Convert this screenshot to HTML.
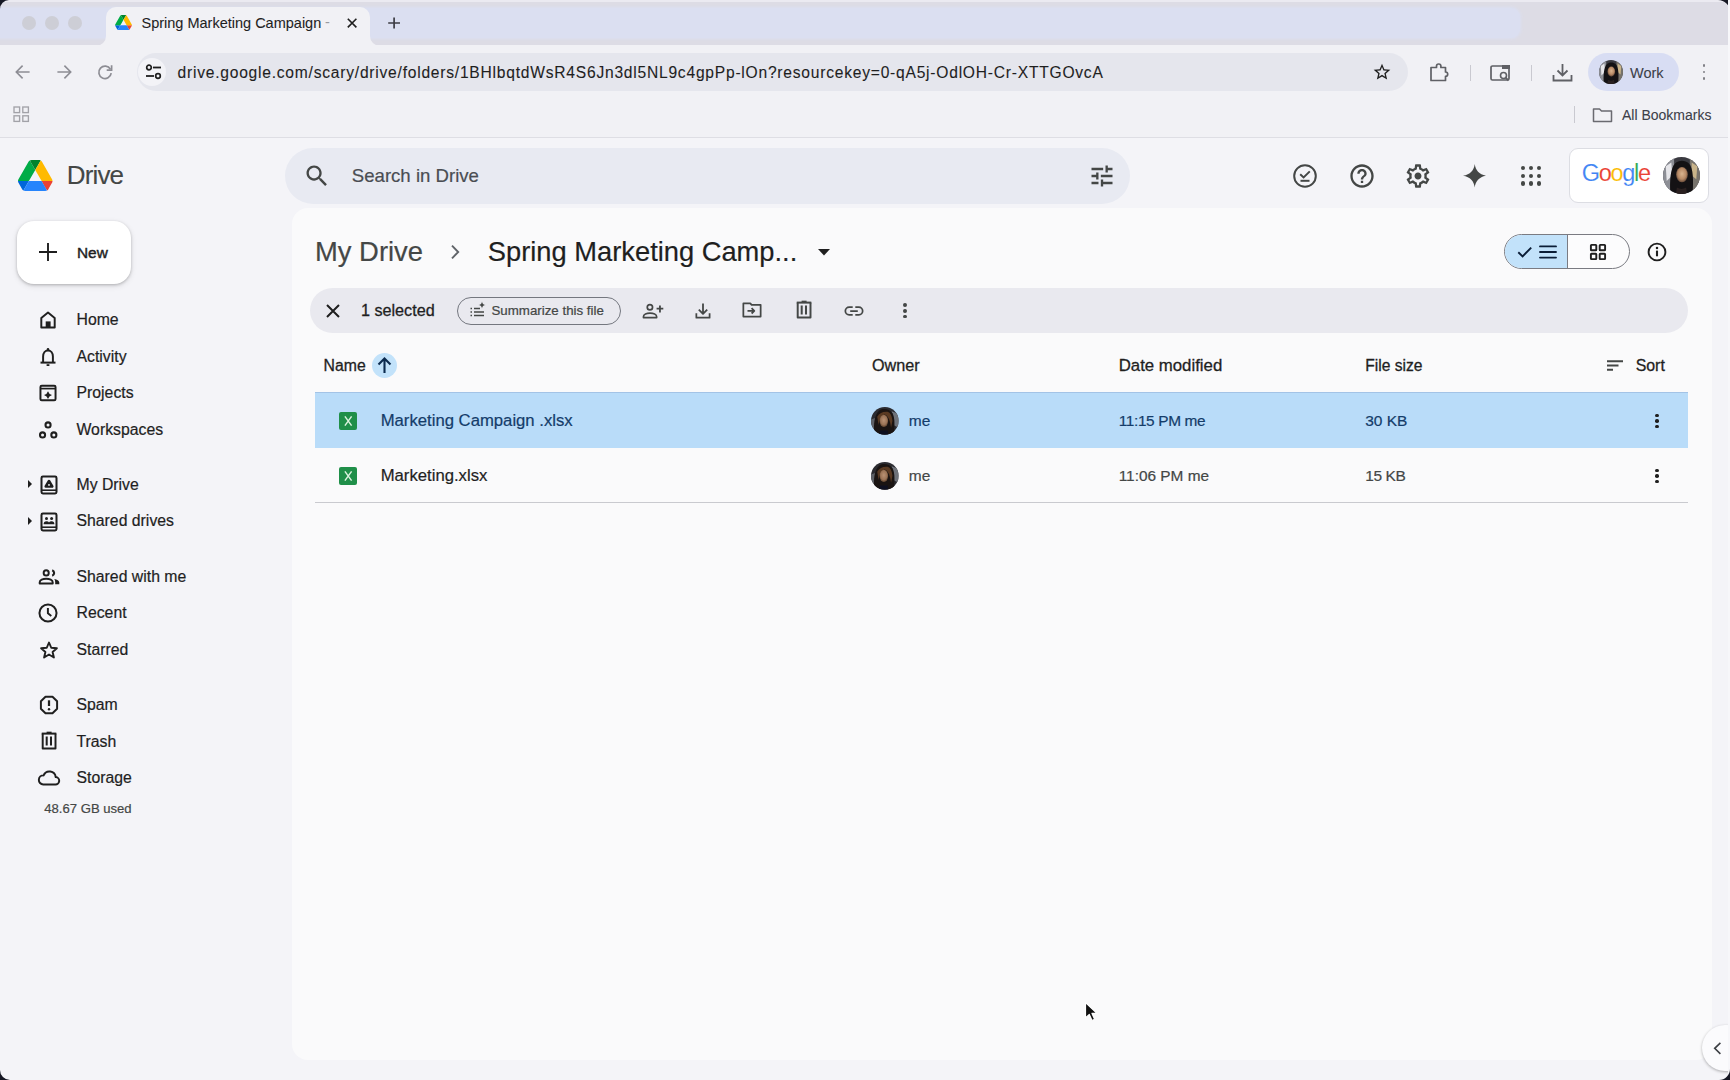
<!DOCTYPE html><html><head><meta charset="utf-8"><style>
html,body{margin:0;padding:0;}
body{width:1730px;height:1080px;position:relative;overflow:hidden;background:#f4f4f8;font-family:"Liberation Sans",sans-serif;}
.b{position:absolute;}
.t{position:absolute;white-space:nowrap;line-height:1.15;}
</style></head><body>
<div class="b" style="left:0px;top:0px;width:1730px;height:46px;background:#dddce5;"></div>
<div class="b" style="left:0px;top:0px;width:1730px;height:2px;background:#ebeaf1;"></div>
<div class="b" style="left:-12px;top:8px;width:1532px;height:30px;border-radius:9px;background:#dbdff1;box-shadow:0 0 3px 1px #dbdff1;"></div>
<svg class="b" style="left:0;top:0" width="9" height="9"><path d="M0 0H9A9 9 0 0 0 0 9Z" fill="#161824"/></svg>
<svg class="b" style="left:1718px;top:0" width="12" height="12"><path d="M12 0H0A12 12 0 0 1 12 12Z" fill="#161824"/></svg>
<div class="b" style="left:22px;top:16px;width:14px;height:14px;border-radius:50%;background:#cdced6;"></div>
<div class="b" style="left:45px;top:16px;width:14px;height:14px;border-radius:50%;background:#cdced6;"></div>
<div class="b" style="left:68px;top:16px;width:14px;height:14px;border-radius:50%;background:#cdced6;"></div>
<div class="b" style="left:0px;top:45px;width:1730px;height:92px;background:#f1f1f5;"></div>
<div class="b" style="left:0px;top:137px;width:1730px;height:1px;background:#dedee4;"></div>
<div class="b" style="left:106px;top:7px;width:264px;height:40px;background:#f1f1f5;border-radius:10px 10px 0 0;"></div>
<svg class="b" style="left:96px;top:35px" width="10" height="11"><path d="M10 0V11H0A10 10 0 0 0 10 1Z" fill="#f1f1f5"/></svg>
<svg class="b" style="left:370px;top:35px" width="10" height="11"><path d="M0 0V11H10A10 10 0 0 1 0 1Z" fill="#f1f1f5"/></svg>
<svg class="b" style="left:115px;top:15px;" width="17" height="15" viewBox="0 0 87.3 78"><path d="m6.6 66.85 3.85 6.65c.8 1.4 1.95 2.5 3.3 3.3l13.75-23.8h-27.5c0 1.55.4 3.1 1.2 4.5z" fill="#0066da"/><path d="m43.65 25-13.75-23.8c-1.35.8-2.5 1.9-3.3 3.3l-25.4 44a9.06 9.06 0 0 0 -1.2 4.5h27.5z" fill="#00ac47"/><path d="m73.55 76.8c1.35-.8 2.5-1.9 3.3-3.3l1.6-2.75 7.65-13.25c.8-1.4 1.2-2.95 1.2-4.5h-27.502l5.852 11.5z" fill="#ea4335"/><path d="m43.65 25 13.75-23.8c-1.35-.8-2.9-1.2-4.5-1.2h-18.5c-1.6 0-3.15.45-4.5 1.2z" fill="#00832d"/><path d="m59.8 53h-32.3l-13.75 23.8c1.35.8 2.9 1.2 4.5 1.2h50.8c1.6 0 3.15-.45 4.5-1.2z" fill="#2684fc"/><path d="m73.4 26.5-12.7-22c-.8-1.4-1.95-2.5-3.3-3.3l-13.75 23.8 16.15 28h27.45c0-1.55-.4-3.1-1.2-4.5z" fill="#ffba00"/></svg>
<div class="t " style="left:141.50px;top:14.58px;font-size:14.5px;color:#1f1f1f;-webkit-text-stroke:0.08px #1f1f1f;">Spring Marketing Campaign</div>
<div class="t" style="left:325px;top:14px;font-size:14.5px;color:#9a9aa0;">-</div>
<svg class="b" style="left:340.40px;top:11.00px" width="24" height="24" viewBox="0 0 24 24"><path d="M7.8 7.8L16.4 16.4M16.4 7.8L7.8 16.4" stroke="#1f1f1f" stroke-width="1.6"/></svg>
<svg class="b" style="left:381.60px;top:11.10px" width="24" height="24" viewBox="0 0 24 24"><path d="M6.2 12H18M12.1 6.5V17.5" stroke="#3c3c44" stroke-width="1.7"/></svg>
<svg class="b" style="left:11.40px;top:60.00px" width="24" height="24" viewBox="0 0 24 24"><path d="M18.6 12H5.6M11.6 5.6L5.3 12L11.6 18.4" fill="none" stroke="#8d8d94" stroke-width="1.6"/></svg>
<svg class="b" style="left:52.20px;top:60.00px" width="24" height="24" viewBox="0 0 24 24"><path d="M5.4 12H18.4M12.4 5.6L18.7 12L12.4 18.4" fill="none" stroke="#8d8d94" stroke-width="1.6"/></svg>
<svg class="b" style="left:93.00px;top:60.00px" width="24" height="24" viewBox="0 0 24 24"><path d="M17.4 9.2A6.2 6.2 0 1 0 18.2 13.2" fill="none" stroke="#8d8d94" stroke-width="1.7"/><path d="M18.6 5.3V10.2H13.7" fill="none" stroke="#8d8d94" stroke-width="1.7"/></svg>
<div class="b" style="left:137px;top:53px;width:1271px;height:38px;border-radius:19px;background:#e5e6ed;"></div>
<div class="b" style="left:138px;top:58px;width:28px;height:28px;border-radius:50%;background:#f3f3f7;"></div>
<svg class="b" style="left:145px;top:64px;" width="17" height="16" viewBox="0 0 17 16"><circle cx="4" cy="3.5" r="2.3" fill="none" stroke="#1f1f1f" stroke-width="1.7"/><path d="M8 3.5H16" stroke="#1f1f1f" stroke-width="1.8"/><circle cx="13" cy="12" r="2.3" fill="none" stroke="#1f1f1f" stroke-width="1.7"/><path d="M1 12H9" stroke="#1f1f1f" stroke-width="1.8"/></svg>
<div class="t " style="left:177.50px;top:63.88px;font-size:15.6px;color:#1f1f1f;letter-spacing:0.77px;-webkit-text-stroke:0.1px #1f1f1f;">drive.google.com/scary/drive/folders/1BHlbqtdWsR4S6Jn3dl5NL9c4gpPp-lOn?resourcekey=0-qA5j-OdlOH-Cr-XTTGOvcA</div>
<svg class="b" style="left:1372.00px;top:62.00px" width="20" height="20" viewBox="0 0 24 24"><path fill="#1f1f1f" d="M22 9.24l-7.19-.62L12 2 9.19 8.63 2 9.24l5.46 4.73L5.82 21 12 17.27 18.18 21l-1.63-7.03L22 9.24zM12 15.4l-3.76 2.27 1-4.28-3.32-2.88 4.38-.38L12 6.1l1.71 4.04 4.38.38-3.32 2.88 1 4.28L12 15.4z"/></svg>
<svg class="b" style="left:1429px;top:63px;" width="23" height="19" viewBox="0 0 23 19"><path d="M2 4.5H7.5V3.2A2.2 2.2 0 0 1 11.9 3.2V4.5H16.5V9A2.2 2.2 0 0 1 16.5 13.4V17.5H2Z" fill="none" stroke="#5f6065" stroke-width="1.7" stroke-linejoin="round"/></svg>
<div class="b" style="left:1469.5px;top:65px;width:1.2px;height:16px;background:#c9c9d0;"></div>
<svg class="b" style="left:1490px;top:64px;" width="22" height="18" viewBox="0 0 22 18"><rect x="1" y="2" width="18" height="14" rx="1.5" fill="none" stroke="#5f6065" stroke-width="1.7"/><rect x="12" y="1" width="8" height="4" fill="#5f6065"/><circle cx="13.5" cy="11.5" r="3" fill="#f1f1f5" stroke="#5f6065" stroke-width="1.6"/><path d="M15.6 13.6L18.5 16.5" stroke="#5f6065" stroke-width="1.8"/></svg>
<div class="b" style="left:1531px;top:65px;width:1.2px;height:16px;background:#c9c9d0;"></div>
<svg class="b" style="left:1552px;top:63px;" width="21" height="19" viewBox="0 0 21 19"><path d="M10.5 1V12M5.5 7.5L10.5 12.5L15.5 7.5" fill="none" stroke="#5f6065" stroke-width="1.8"/><path d="M1.5 12V17.5H19.5V12" fill="none" stroke="#5f6065" stroke-width="1.8"/></svg>
<div class="b" style="left:1588px;top:53px;width:91px;height:38px;border-radius:19px;background:#d8ddf3;"></div>
<svg class="b" style="left:1599.00px;top:60.00px" width="24" height="24" viewBox="0 0 40 40"><defs><clipPath id="cpw"><circle cx="20" cy="20" r="20"/></clipPath><radialGradient id="fcw" cx="50%" cy="45%" r="50%"><stop offset="0" stop-color="#d9b48f"/><stop offset=".7" stop-color="#b88a66"/><stop offset="1" stop-color="#7a5a44"/></radialGradient></defs><g clip-path="url(#cpw)"><rect width="40" height="40" fill="#3a3a40"/><path d="M0 0H12V40H0Z" fill="#8d8f96"/><path d="M29 0H40V40H29Z" fill="#77736c"/><path d="M3 10L9 6L10 20L4 26Z" fill="#e6e6ea"/><path d="M31 6L37 10L36 24L31 20Z" fill="#c9b48a"/><path d="M8 40C7 26 8 12 13 7C17 3 24 3 28 7C33 12 33 26 32 40Z" fill="#141214"/><ellipse cx="20.5" cy="19" rx="6.3" ry="8.3" fill="url(#fcw)"/><path d="M13 12Q20 6 28 12L27 9Q20 3 14 9Z" fill="#141214"/><path d="M15 33Q20 36 25 33L26 40H14Z" fill="#2a2020"/></g></svg>
<div class="t " style="left:1630.00px;top:64.68px;font-size:14.5px;color:#3c4049;-webkit-text-stroke:0.08px #3c4049;">Work</div>
<div class="b" style="left:1702.55px;top:64.05px;width:2.9px;height:2.9px;border-radius:50%;background:#808086;"></div>
<div class="b" style="left:1702.55px;top:70.55px;width:2.9px;height:2.9px;border-radius:50%;background:#808086;"></div>
<div class="b" style="left:1702.55px;top:77.05px;width:2.9px;height:2.9px;border-radius:50%;background:#808086;"></div>
<svg class="b" style="left:12.5px;top:106px;" width="18" height="17" viewBox="0 0 18 17"><rect x="1" y="1" width="5.6" height="5.6" fill="none" stroke="#a2a2a8" stroke-width="1.35"/><rect x="9.8" y="1" width="5.6" height="5.6" fill="none" stroke="#a2a2a8" stroke-width="1.35"/><rect x="1" y="9.8" width="5.6" height="5.6" fill="none" stroke="#a2a2a8" stroke-width="1.35"/><rect x="9.8" y="9.8" width="5.6" height="5.6" fill="none" stroke="#a2a2a8" stroke-width="1.35"/></svg>
<div class="b" style="left:1573.5px;top:106px;width:1.2px;height:17px;background:#c9c9d0;"></div>
<svg class="b" style="left:1592px;top:107px;" width="21" height="16" viewBox="0 0 21 16"><path d="M1.5 2H7.5L9.5 4H19.5V14.5H1.5Z" fill="none" stroke="#6a6a70" stroke-width="1.5" stroke-linejoin="round"/></svg>
<div class="t " style="left:1622.00px;top:107.03px;font-size:14px;color:#3c4049;-webkit-text-stroke:0.08px #3c4049;">All Bookmarks</div>
<svg class="b" style="left:18px;top:160px;" width="34.5" height="31" viewBox="0 0 87.3 78"><path d="m6.6 66.85 3.85 6.65c.8 1.4 1.95 2.5 3.3 3.3l13.75-23.8h-27.5c0 1.55.4 3.1 1.2 4.5z" fill="#0066da"/><path d="m43.65 25-13.75-23.8c-1.35.8-2.5 1.9-3.3 3.3l-25.4 44a9.06 9.06 0 0 0 -1.2 4.5h27.5z" fill="#00ac47"/><path d="m73.55 76.8c1.35-.8 2.5-1.9 3.3-3.3l1.6-2.75 7.65-13.25c.8-1.4 1.2-2.95 1.2-4.5h-27.502l5.852 11.5z" fill="#ea4335"/><path d="m43.65 25 13.75-23.8c-1.35-.8-2.9-1.2-4.5-1.2h-18.5c-1.6 0-3.15.45-4.5 1.2z" fill="#00832d"/><path d="m59.8 53h-32.3l-13.75 23.8c1.35.8 2.9 1.2 4.5 1.2h50.8c1.6 0 3.15-.45 4.5-1.2z" fill="#2684fc"/><path d="m73.4 26.5-12.7-22c-.8-1.4-1.95-2.5-3.3-3.3l-13.75 23.8 16.15 28h27.45c0-1.55-.4-3.1-1.2-4.5z" fill="#ffba00"/></svg>
<div class="t " style="left:66.80px;top:160.57px;font-size:26px;color:#444746;letter-spacing:-0.85px;-webkit-text-stroke:0.1px #444746;">Drive</div>
<div class="b" style="left:285px;top:148px;width:845px;height:55.5px;border-radius:28px;background:#e8eaf2;"></div>
<svg class="b" style="left:303.00px;top:161.50px" width="28" height="28" viewBox="0 0 24 24"><path fill="#444746" d="M15.5 14h-.79l-.28-.27C15.41 12.59 16 11.11 16 9.5 16 5.91 13.09 3 9.5 3S3 5.91 3 9.5 5.91 16 9.5 16c1.61 0 3.09-.59 4.23-1.57l.27.28v.79l5 4.99L20.49 19l-4.99-5zm-6 0C7.01 14 5 11.99 5 9.5S7.01 5 9.5 5 14 7.01 14 9.5 11.99 14 9.5 14z"/></svg>
<div class="t " style="left:351.80px;top:164.67px;font-size:18.6px;color:#4a4d52;-webkit-text-stroke:0.2px #4a4d52;">Search in Drive</div>
<svg class="b" style="left:1088.00px;top:161.50px" width="28" height="28" viewBox="0 0 24 24"><path fill="#444746" d="M3 17v2h6v-2H3zM3 5v2h10V5H3zm10 16v-2h8v-2h-8v-2h-2v6h2zM7 9v2H3v2h4v2h2V9H7zm14 4v-2H11v2h10zm-6-4h2V7h4V5h-4V3h-2v6z"/></svg>
<svg class="b" style="left:1292px;top:163px;" width="26" height="26" viewBox="0 0 26 26"><circle cx="13" cy="13" r="10.8" fill="none" stroke="#444746" stroke-width="2"/><path d="M8.2 11.2L11.6 14.4L17.8 8.4" fill="none" stroke="#444746" stroke-width="2"/><path d="M8.5 17.8H17.5" stroke="#444746" stroke-width="2"/></svg>
<svg class="b" style="left:1347.50px;top:162.00px" width="28" height="28" viewBox="0 0 24 24"><path fill="#444746" d="M11 18h2v-2h-2v2zm1-16C6.48 2 2 6.48 2 12s4.48 10 10 10 10-4.48 10-10S17.52 2 12 2zm0 18c-4.41 0-8-3.59-8-8s3.59-8 8-8 8 3.59 8 8-3.59 8-8 8zm0-14c-2.21 0-4 1.79-4 4h2c0-1.1.9-2 2-2s2 .9 2 2c0 2-3 1.75-3 5h2c0-2.25 3-2.5 3-5 0-2.21-1.79-4-4-4z"/></svg>
<svg class="b" style="left:1404.00px;top:162.00px" width="28" height="28" viewBox="0 0 24 24"><path fill="#444746" d="M19.43 12.98c.04-.32.07-.64.07-.98 0-.34-.03-.66-.07-.98l2.11-1.65c.19-.15.24-.42.12-.64l-2-3.46a.5.5 0 0 0-.61-.22l-2.49 1c-.52-.4-1.08-.73-1.69-.98l-.38-2.65A.49.49 0 0 0 14 2h-4c-.25 0-.46.18-.49.42l-.38 2.65c-.61.25-1.17.59-1.69.98l-2.49-1a.5.5 0 0 0-.61.22l-2 3.46c-.13.22-.07.49.12.64l2.11 1.65c-.04.32-.07.65-.07.98s.03.66.07.98l-2.11 1.65c-.19.15-.24.42-.12.64l2 3.46c.12.22.39.3.61.22l2.49-1c.52.4 1.08.73 1.69.98l.38 2.65c.03.24.24.42.49.42h4c.25 0 .46-.18.49-.42l.38-2.65c.61-.25 1.17-.59 1.69-.98l2.49 1c.23.09.49 0 .61-.22l2-3.46c.12-.22.07-.49-.12-.64l-2.11-1.65zM17.45 11.27c.04.31.05.52.05.73 0 .21-.02.43-.05.73l-.14 1.13.89.7 1.08.84-.7 1.21-1.27-.51-1.04-.42-.9.68c-.43.32-.84.56-1.25.73l-1.06.43-.16 1.13-.2 1.35h-1.4l-.19-1.35-.16-1.13-1.06-.43c-.43-.18-.83-.41-1.23-.71l-.91-.7-1.06.43-1.27.51-.7-1.21 1.08-.84.89-.7-.14-1.13c-.03-.31-.05-.54-.05-.74s.02-.43.05-.73l.14-1.13-.89-.7-1.08-.84.7-1.21 1.27.51 1.04.42.9-.68c.43-.32.84-.56 1.25-.73l1.06-.43.16-1.13.2-1.35h1.39l.19 1.35.16 1.13 1.06.43c.43.18.83.41 1.23.71l.91.7 1.06-.43 1.27-.51.7 1.21-1.07.85-.89.7.14 1.13zM12 9c-1.66 0-3 1.34-3 3s1.34 3 3 3 3-1.34 3-3-1.34-3-3-3z"/></svg>
<svg class="b" style="left:1462.8px;top:164.4px;" width="23.5" height="23.5" viewBox="0 0 23.5 23.5"><path d="M11.75 0C12.5 6.2 16.2 10.6 23.5 11.75C16.2 12.9 12.5 17.3 11.75 23.5C11 17.3 7.3 12.9 0 11.75C7.3 10.6 11 6.2 11.75 0Z" fill="#444746"/></svg>
<div class="b" style="left:1521.15px;top:166.05px;width:4.1px;height:4.1px;border-radius:50%;background:#444746;"></div>
<div class="b" style="left:1528.95px;top:166.05px;width:4.1px;height:4.1px;border-radius:50%;background:#444746;"></div>
<div class="b" style="left:1536.75px;top:166.05px;width:4.1px;height:4.1px;border-radius:50%;background:#444746;"></div>
<div class="b" style="left:1521.15px;top:173.75px;width:4.1px;height:4.1px;border-radius:50%;background:#444746;"></div>
<div class="b" style="left:1528.95px;top:173.75px;width:4.1px;height:4.1px;border-radius:50%;background:#444746;"></div>
<div class="b" style="left:1536.75px;top:173.75px;width:4.1px;height:4.1px;border-radius:50%;background:#444746;"></div>
<div class="b" style="left:1521.15px;top:181.45px;width:4.1px;height:4.1px;border-radius:50%;background:#444746;"></div>
<div class="b" style="left:1528.95px;top:181.45px;width:4.1px;height:4.1px;border-radius:50%;background:#444746;"></div>
<div class="b" style="left:1536.75px;top:181.45px;width:4.1px;height:4.1px;border-radius:50%;background:#444746;"></div>
<div class="b" style="left:1569.2px;top:148.3px;width:137.7px;height:53.1px;border-radius:9px;background:#ffffff;border:1px solid #dcdde3;"></div>
<div class="t" style="left:1581.7px;top:160.33px;font-size:23.5px;letter-spacing:-1.3px;-webkit-text-stroke:0.1px #fff;"><span style="color:#4285f4">G</span><span style="color:#ea4335">o</span><span style="color:#fbbc05">o</span><span style="color:#4285f4">g</span><span style="color:#34a853">l</span><span style="color:#ea4335">e</span></div>
<svg class="b" style="left:1663.10px;top:157.35px" width="37" height="37" viewBox="0 0 40 40"><defs><clipPath id="cpg"><circle cx="20" cy="20" r="20"/></clipPath><radialGradient id="fcg" cx="50%" cy="45%" r="50%"><stop offset="0" stop-color="#d9b48f"/><stop offset=".7" stop-color="#b88a66"/><stop offset="1" stop-color="#7a5a44"/></radialGradient></defs><g clip-path="url(#cpg)"><rect width="40" height="40" fill="#3a3a40"/><path d="M0 0H12V40H0Z" fill="#8d8f96"/><path d="M29 0H40V40H29Z" fill="#77736c"/><path d="M3 10L9 6L10 20L4 26Z" fill="#e6e6ea"/><path d="M31 6L37 10L36 24L31 20Z" fill="#c9b48a"/><path d="M8 40C7 26 8 12 13 7C17 3 24 3 28 7C33 12 33 26 32 40Z" fill="#141214"/><ellipse cx="20.5" cy="19" rx="6.3" ry="8.3" fill="url(#fcg)"/><path d="M13 12Q20 6 28 12L27 9Q20 3 14 9Z" fill="#141214"/><path d="M15 33Q20 36 25 33L26 40H14Z" fill="#2a2020"/></g></svg>
<div class="b" style="left:16.5px;top:220.5px;width:114.5px;height:63px;border-radius:17px;background:#ffffff;box-shadow:0 1px 3px rgba(0,0,0,.22),0 2px 6px rgba(0,0,0,.10);"></div>
<svg class="b" style="left:36.35px;top:240.00px" width="24" height="24" viewBox="0 0 24 24"><path d="M3 12H21M12 3V21" stroke="#1f1f1f" stroke-width="1.9"/></svg>
<div class="t " style="left:77.00px;top:243.66px;font-size:15.4px;color:#1f1f1f;-webkit-text-stroke:0.45px #1f1f1f;">New</div>
<svg class="b" style="left:36.25px;top:308.10px" width="24" height="24" viewBox="0 0 24 24"><path d="M5.3 19.45V9.9L12 4.6L18.7 9.9V19.45Z" fill="none" stroke="#1f1f1f" stroke-width="1.96" stroke-linejoin="round"/><rect x="9.7" y="13.4" width="4.9" height="6.4" fill="#1f1f1f"/></svg>
<div class="t " style="left:76.50px;top:310.90px;font-size:15.8px;color:#1f1f1f;-webkit-text-stroke:0.2px #1f1f1f;">Home</div>
<svg class="b" style="left:36.25px;top:345.00px" width="24" height="24" viewBox="0 0 24 24"><path d="M7.1 17.4V11.6C7.1 8.1 9.2 5.4 12 5.4S16.9 8.1 16.9 11.6V17.4" fill="none" stroke="#1f1f1f" stroke-width="1.96" stroke-linejoin="round"/><path d="M4.5 17.6H19.5" fill="none" stroke="#1f1f1f" stroke-width="2.02" stroke-linejoin="round"/><circle cx="12" cy="4.4" r="1.3" fill="#1f1f1f"/><rect x="10.6" y="19.2" width="2.8" height="1.8" fill="#1f1f1f"/></svg>
<div class="t " style="left:76.50px;top:347.50px;font-size:15.8px;color:#1f1f1f;-webkit-text-stroke:0.2px #1f1f1f;">Activity</div>
<svg class="b" style="left:36.25px;top:381.25px" width="24" height="24" viewBox="0 0 24 24"><rect x="4.45" y="4.65" width="15.1" height="14.7" rx="1.3" fill="none" stroke="#1f1f1f" stroke-width="1.96" stroke-linejoin="round"/><path d="M4.5 7.6H19.5" fill="none" stroke="#1f1f1f" stroke-width="1.68" stroke-linejoin="round"/><path d="M12 10.2Q12.9 13.2 16 14.1Q12.9 15 12 18Q11.1 15 8 14.1Q11.1 13.2 12 10.2Z" fill="#1f1f1f"/></svg>
<div class="t " style="left:76.50px;top:384.10px;font-size:15.8px;color:#1f1f1f;-webkit-text-stroke:0.2px #1f1f1f;">Projects</div>
<svg class="b" style="left:36.25px;top:418.30px" width="24" height="24" viewBox="0 0 24 24"><circle cx="12.05" cy="6.9" r="2.55" fill="none" stroke="#1f1f1f" stroke-width="2.07" stroke-linejoin="round"/><circle cx="6.55" cy="16.9" r="2.55" fill="none" stroke="#1f1f1f" stroke-width="2.07" stroke-linejoin="round"/><circle cx="17.85" cy="16.9" r="2.55" fill="none" stroke="#1f1f1f" stroke-width="2.07" stroke-linejoin="round"/></svg>
<div class="t " style="left:76.50px;top:420.70px;font-size:15.8px;color:#1f1f1f;-webkit-text-stroke:0.2px #1f1f1f;">Workspaces</div>
<svg class="b" style="left:36.50px;top:472.75px" width="24" height="24" viewBox="0 0 24 24"><rect x="4.5" y="3.55" width="15" height="16.9" rx="1.4" fill="none" stroke="#1f1f1f" stroke-width="2.02" stroke-linejoin="round"/><path d="M4.6 17.2H19.4" fill="none" stroke="#1f1f1f" stroke-width="1.57" stroke-linejoin="round"/><path d="M12 8.3L15.1 13.4H8.9Z" fill="#1f1f1f" fill="none" stroke="#1f1f1f" stroke-width="2.91" stroke-linejoin="round"/><circle cx="12" cy="11.9" r=".9" fill="#fcfcfd"/></svg>
<div class="t " style="left:76.50px;top:475.50px;font-size:15.8px;color:#1f1f1f;-webkit-text-stroke:0.2px #1f1f1f;">My Drive</div>
<svg class="b" style="left:36.50px;top:509.50px" width="24" height="24" viewBox="0 0 24 24"><rect x="4.5" y="3.55" width="15" height="16.9" rx="1.4" fill="none" stroke="#1f1f1f" stroke-width="2.02" stroke-linejoin="round"/><path d="M4.6 17.2H19.4" fill="none" stroke="#1f1f1f" stroke-width="1.57" stroke-linejoin="round"/><circle cx="9.5" cy="8.6" r="1.5" fill="#1f1f1f"/><circle cx="14.6" cy="8.6" r="1.5" fill="#1f1f1f"/><path d="M6.6 14.3Q6.6 11.2 9.5 11.2Q11.4 11.2 12 12.4Q12.6 11.2 14.6 11.2Q17.4 11.2 17.4 14.3Z" fill="#1f1f1f"/></svg>
<div class="t " style="left:76.50px;top:512.10px;font-size:15.8px;color:#1f1f1f;-webkit-text-stroke:0.2px #1f1f1f;">Shared drives</div>
<svg class="b" style="left:36.50px;top:564.65px" width="24" height="24" viewBox="0 0 24 24"><circle cx="9.2" cy="7.9" r="2.55" fill="none" stroke="#1f1f1f" stroke-width="1.96" stroke-linejoin="round"/><path d="M2.7 18.4V17.3C2.7 15.1 5.9 13.8 9.2 13.8S15.7 15.1 15.7 17.3V18.4Z" fill="none" stroke="#1f1f1f" stroke-width="1.96" stroke-linejoin="round"/><path d="M15.2 5.2A3 3 0 0 1 15.2 10.8" fill="none" stroke="#1f1f1f" stroke-width="2.13" stroke-linejoin="round"/><path d="M17.3 14.1C20 14.6 22.3 15.8 22.3 17.5V19.25H18.2V17.2C18.2 16 17.9 15 17.3 14.1Z" fill="#1f1f1f"/></svg>
<div class="t " style="left:76.50px;top:567.60px;font-size:15.8px;color:#1f1f1f;-webkit-text-stroke:0.2px #1f1f1f;">Shared with me</div>
<svg class="b" style="left:36.35px;top:601.35px" width="24" height="24" viewBox="0 0 24 24"><circle cx="12" cy="12" r="8.55" fill="none" stroke="#1f1f1f" stroke-width="2.02" stroke-linejoin="round"/><path d="M11.9 7V12.2L15.3 14.9" fill="none" stroke="#1f1f1f" stroke-width="1.96" stroke-linejoin="round"/></svg>
<div class="t " style="left:76.50px;top:604.10px;font-size:15.8px;color:#1f1f1f;-webkit-text-stroke:0.2px #1f1f1f;">Recent</div>
<svg class="b" style="left:36.50px;top:637.65px" width="24" height="24" viewBox="0 0 24 24"><path d="M12 4.5L14.25 9.75L19.9 10.2L15.6 13.95L16.9 19.5L12 16.55L7.1 19.5L8.4 13.95L4.1 10.2L9.75 9.75Z" fill="none" stroke="#1f1f1f" stroke-width="1.90" stroke-linejoin="round"/></svg>
<div class="t " style="left:76.50px;top:640.70px;font-size:15.8px;color:#1f1f1f;-webkit-text-stroke:0.2px #1f1f1f;">Starred</div>
<svg class="b" style="left:36.50px;top:693.20px" width="24" height="24" viewBox="0 0 24 24"><path d="M8.5 3.7H15.5L20.1 8.3V15.7L15.5 20.3H8.5L3.9 15.7V8.3Z" fill="none" stroke="#1f1f1f" stroke-width="1.96" stroke-linejoin="round"/><path d="M12 7.3V13" fill="none" stroke="#1f1f1f" stroke-width="2.24" stroke-linejoin="round"/><circle cx="12" cy="16.3" r="1.2" fill="#1f1f1f"/></svg>
<div class="t " style="left:76.50px;top:695.90px;font-size:15.8px;color:#1f1f1f;-webkit-text-stroke:0.2px #1f1f1f;">Spam</div>
<svg class="b" style="left:36.60px;top:729.30px" width="24" height="24" viewBox="0 0 24 24"><path d="M5.7 4.6V19.5H18.5V4.6" fill="none" stroke="#1f1f1f" stroke-width="1.96" stroke-linejoin="round"/><path d="M4.75 4.6H19.3" fill="none" stroke="#1f1f1f" stroke-width="2.02" stroke-linejoin="round"/><path d="M9.6 3.5H14.6" fill="none" stroke="#1f1f1f" stroke-width="1.68" stroke-linejoin="round"/><path d="M9.7 7.6V16.5M14.0 7.6V16.5" fill="none" stroke="#1f1f1f" stroke-width="2.02" stroke-linejoin="round"/></svg>
<div class="t " style="left:76.50px;top:732.50px;font-size:15.8px;color:#1f1f1f;-webkit-text-stroke:0.2px #1f1f1f;">Trash</div>
<svg class="b" style="left:36.50px;top:766.35px" width="24" height="24" viewBox="0 0 24 24"><path d="M6.2 18.5H18.3A3.7 3.7 0 0 0 18.7 11.1A6.3 6.3 0 0 0 6.6 9.4A4.55 4.55 0 0 0 6.2 18.5Z" fill="none" stroke="#1f1f1f" stroke-width="1.96" stroke-linejoin="round"/></svg>
<div class="t " style="left:76.50px;top:769.10px;font-size:15.8px;color:#1f1f1f;-webkit-text-stroke:0.2px #1f1f1f;">Storage</div>
<svg class="b" style="left:27px;top:480.3px;" width="6" height="8" viewBox="0 0 6 8"><path d="M1 0L5 4L1 8Z" fill="#1f1f1f"/></svg>
<svg class="b" style="left:27px;top:516.9px;" width="6" height="8" viewBox="0 0 6 8"><path d="M1 0L5 4L1 8Z" fill="#1f1f1f"/></svg>
<div class="t " style="left:44.30px;top:800.74px;font-size:13.1px;color:#444746;-webkit-text-stroke:0.2px #444746;">48.67 GB used</div>
<div class="b" style="left:292px;top:208px;width:1419.5px;height:852px;border-radius:16px;background:#fafafb;"></div>
<div class="t " style="left:315.00px;top:236.40px;font-size:27.4px;color:#444746;-webkit-text-stroke:0.2px #444746;">My Drive</div>
<svg class="b" style="left:442.80px;top:240.20px" width="24" height="24" viewBox="0 0 24 24"><path d="M9 5.6L15.2 12L9 18.4" fill="none" stroke="#5f6368" stroke-width="1.9"/></svg>
<div class="t " style="left:487.80px;top:236.49px;font-size:27.3px;color:#1f1f1f;-webkit-text-stroke:0.2px #1f1f1f;">Spring Marketing Camp...</div>
<svg class="b" style="left:818px;top:249px;" width="12" height="7" viewBox="0 0 12 7"><path d="M0 0H12L6 6.5Z" fill="#1f1f1f"/></svg>
<div class="b" style="left:1504.4px;top:233.8px;width:123.4px;height:33.1px;border-radius:18px;border:1.25px solid #7a7b82;overflow:hidden;background:#fcfcfd;"><div style="position:absolute;left:0;top:0;width:62px;height:34px;background:#c2e2fa;border-right:1.25px solid #7a7b82;"></div></div>
<svg class="b" style="left:1512.70px;top:240.20px" width="24" height="24" viewBox="0 0 24 24"><path d="M5.3 12.3L9.6 16.4L18.2 7.6" fill="none" stroke="#0b1d36" stroke-width="1.9"/></svg>
<svg class="b" style="left:1536.00px;top:240.20px" width="24" height="24" viewBox="0 0 24 24"><path d="M4 6.4H20M4 12H20M4 17.6H20" stroke="#0b1d36" stroke-width="1.9" stroke-linecap="round"/></svg>
<svg class="b" style="left:1586.20px;top:240.05px" width="24" height="24" viewBox="0 0 24 24"><rect x="4.9" y="4.9" width="5.4" height="5.4" rx=".6" fill="none" stroke="#1f1f1f" stroke-width="1.9"/><rect x="13.7" y="4.9" width="5.4" height="5.4" rx=".6" fill="none" stroke="#1f1f1f" stroke-width="1.9"/><rect x="4.9" y="13.7" width="5.4" height="5.4" rx=".6" fill="none" stroke="#1f1f1f" stroke-width="1.9"/><rect x="13.7" y="13.7" width="5.4" height="5.4" rx=".6" fill="none" stroke="#1f1f1f" stroke-width="1.9"/></svg>
<svg class="b" style="left:1644.75px;top:240.00px" width="24" height="24" viewBox="0 0 24 24"><circle cx="12" cy="12" r="8.4" fill="none" stroke="#1f1f1f" stroke-width="1.9"/><path d="M12 10.6V16.3" stroke="#1f1f1f" stroke-width="2.1"/><circle cx="12" cy="7.9" r="1.25" fill="#1f1f1f"/></svg>
<div class="b" style="left:310px;top:288px;width:1378px;height:45px;border-radius:23px;background:#e9e9ef;"></div>
<svg class="b" style="left:325px;top:303px;" width="16" height="16" viewBox="0 0 16 16"><path d="M2 2L14 14M14 2L2 14" stroke="#1f1f1f" stroke-width="2"/></svg>
<div class="t " style="left:360.90px;top:301.34px;font-size:16.2px;color:#1f1f1f;-webkit-text-stroke:0.3px #1f1f1f;">1 selected</div>
<div class="b" style="left:456.5px;top:297px;width:162px;height:26px;border-radius:14px;border:1.3px solid #74777f;"></div>
<svg class="b" style="left:469px;top:300px;" width="17" height="18" viewBox="0 0 17 18"><path d="M1.5 8.5H3M5 8.5H11M1.5 12H3M5 12H15M1.5 15.5H3M5 15.5H15" stroke="#444746" stroke-width="1.5"/><path d="M13 1.5Q13.4 4.6 16.5 5Q13.4 5.4 13 8.5Q12.6 5.4 9.5 5Q12.6 4.6 13 1.5Z" fill="#444746"/></svg>
<div class="t " style="left:491.50px;top:303.46px;font-size:13.3px;color:#444746;-webkit-text-stroke:0.22px #444746;">Summarize this file</div>
<svg class="b" style="left:640.60px;top:298.70px" width="24" height="24" viewBox="0 0 24 24"><circle cx="8.9" cy="8.2" r="2.65" fill="none" stroke="#444746" stroke-width="1.70" stroke-linejoin="round"/><path d="M2.45 18.55V17.7C2.45 15.4 5.8 14.1 9.05 14.1S15.65 15.4 15.65 17.7V18.55Z" fill="none" stroke="#444746" stroke-width="1.70" stroke-linejoin="round"/><path d="M15.6 9.7H22.3M18.95 6.6V13.5" fill="none" stroke="#444746" stroke-width="1.80" stroke-linejoin="round"/></svg>
<svg class="b" style="left:691.30px;top:298.60px" width="24" height="24" viewBox="0 0 24 24"><path d="M12 4.5V14.6M7.8 10.6L12 14.8L16.2 10.6" fill="none" stroke="#444746" stroke-width="1.80" stroke-linejoin="round"/><path d="M5.35 14.3V18.65H18.6V14.3" fill="none" stroke="#444746" stroke-width="1.75" stroke-linejoin="round"/></svg>
<svg class="b" style="left:740.40px;top:298.25px" width="24" height="24" viewBox="0 0 24 24"><path d="M3.35 18.6V5.4H10.3L11.6 6.85H20.65V18.6Z" fill="none" stroke="#444746" stroke-width="1.75" stroke-linejoin="round"/><path d="M7.5 12.85H14.2M11.6 10.2L14.3 12.85L11.6 15.5" fill="none" stroke="#444746" stroke-width="1.80" stroke-linejoin="round"/></svg>
<svg class="b" style="left:792.15px;top:298.45px" width="24" height="24" viewBox="0 0 24 24"><path d="M5.7 4.6V19.5H18.5V4.6" fill="none" stroke="#444746" stroke-width="1.96" stroke-linejoin="round"/><path d="M4.75 4.6H19.3" fill="none" stroke="#444746" stroke-width="2.02" stroke-linejoin="round"/><path d="M9.6 3.5H14.6" fill="none" stroke="#444746" stroke-width="1.68" stroke-linejoin="round"/><path d="M9.7 7.6V16.5M14.0 7.6V16.5" fill="none" stroke="#444746" stroke-width="2.02" stroke-linejoin="round"/></svg>
<svg class="b" style="left:842.40px;top:298.50px" width="24" height="24" viewBox="0 0 24 24"><path d="M10.7 8.15H7.2A3.85 3.85 0 0 0 7.2 15.85H10.7M13.3 8.15H16.8A3.85 3.85 0 0 1 16.8 15.85H13.3M8.2 12H15.8" fill="none" stroke="#444746" stroke-width="1.75" stroke-linejoin="round"/></svg>
<div class="b" style="left:903.1px;top:303.3px;width:3.8px;height:3.8px;border-radius:50%;background:#444746;"></div>
<div class="b" style="left:903.1px;top:308.75px;width:3.8px;height:3.8px;border-radius:50%;background:#444746;"></div>
<div class="b" style="left:903.1px;top:314.5px;width:3.8px;height:3.8px;border-radius:50%;background:#444746;"></div>
<div class="t " style="left:323.60px;top:356.50px;font-size:15.8px;color:#1f1f1f;-webkit-text-stroke:0.3px #1f1f1f;">Name</div>
<div class="b" style="left:371.5px;top:352.5px;width:25.5px;height:25.5px;border-radius:50%;background:#c2e2fa;"></div>
<svg class="b" style="left:376px;top:356px;" width="17" height="18" viewBox="0 0 17 18"><path d="M8.5 17V2.5M2.5 8.5L8.5 2.5L14.5 8.5" fill="none" stroke="#0b2a4e" stroke-width="2.1"/></svg>
<div class="t " style="left:872.00px;top:356.24px;font-size:16.2px;color:#1f1f1f;-webkit-text-stroke:0.3px #1f1f1f;">Owner</div>
<div class="t " style="left:1118.70px;top:355.70px;font-size:16.8px;color:#1f1f1f;-webkit-text-stroke:0.3px #1f1f1f;">Date modified</div>
<div class="t " style="left:1365.20px;top:356.78px;font-size:15.6px;color:#1f1f1f;-webkit-text-stroke:0.3px #1f1f1f;">File size</div>
<svg class="b" style="left:1606px;top:360px;" width="18" height="12" viewBox="0 0 18 12"><path d="M1 1.2H17M1 5.5H12.5M1 9.8H7" stroke="#444746" stroke-width="1.9"/></svg>
<div class="t " style="left:1635.70px;top:356.51px;font-size:15.9px;color:#1f1f1f;-webkit-text-stroke:0.3px #1f1f1f;">Sort</div>
<div class="b" style="left:315px;top:392px;width:1373px;height:55.5px;background:#b9dcf9;border-top:1px solid #a3c3e6;box-sizing:border-box;"></div>
<div class="b" style="left:315px;top:502px;width:1373px;height:1.2px;background:#c9cacf;"></div>
<div class="b" style="left:338.6px;top:411.8px;width:18.6px;height:18px;border-radius:2px;background:#1f8f49;"></div>
<svg class="b" style="left:338.6px;top:411.8px" width="19" height="18" viewBox="0 0 19 18"><path d="M5.9 4.4L12.6 13.7M12.6 4.4L5.9 13.7" stroke="#dcf2df" stroke-width="1.45"/></svg>
<div class="t " style="left:380.70px;top:411.19px;font-size:16.7px;color:#143c6a;-webkit-text-stroke:0.2px #143c6a;">Marketing Campaign .xlsx</div>
<svg class="b" style="left:871.45px;top:406.95px" width="27.7" height="27.7" viewBox="0 0 40 40"><defs><clipPath id="cqr392"><circle cx="20" cy="20" r="20"/></clipPath><radialGradient id="fqr392" cx="50%" cy="45%" r="50%"><stop offset="0" stop-color="#b99274"/><stop offset=".75" stop-color="#9a7356"/><stop offset="1" stop-color="#6e5038"/></radialGradient></defs><g clip-path="url(#cqr392)"><rect width="40" height="40" fill="#2b2b30"/><path d="M30 6L40 10V30L32 26Z" fill="#6f737a"/><path d="M0 18L6 16L7 30L0 34Z" fill="#5d6066"/><path d="M5 40C3 26 5 10 12 5C18 1 27 3 31 9C35 16 34 28 33 40Z" fill="#1a1412"/><path d="M9 14Q14 6 24 7Q30 9 31 20L29 30Q27 14 20 11Q13 12 11 26Z" fill="#5a3a22"/><ellipse cx="18.5" cy="20" rx="6.2" ry="8.8" fill="url(#fqr392)"/><path d="M13 34L24 34L25 40H12Z" fill="#0e1020"/></g></svg>
<div class="t " style="left:908.80px;top:412.27px;font-size:15.5px;color:#143c6a;-webkit-text-stroke:0.2px #143c6a;">me</div>
<div class="t " style="left:1118.70px;top:412.36px;font-size:15.4px;color:#143c6a;letter-spacing:-0.35px;-webkit-text-stroke:0.2px #143c6a;">11:15 PM me</div>
<div class="t " style="left:1365.20px;top:412.27px;font-size:15.5px;color:#143c6a;letter-spacing:0px;-webkit-text-stroke:0.2px #143c6a;">30 KB</div>
<div class="b" style="left:1655.35px;top:413.54999999999995px;width:3.5px;height:3.5px;border-radius:50%;background:#1f1f1f;"></div>
<div class="b" style="left:1655.35px;top:419.15px;width:3.5px;height:3.5px;border-radius:50%;background:#1f1f1f;"></div>
<div class="b" style="left:1655.35px;top:424.75px;width:3.5px;height:3.5px;border-radius:50%;background:#1f1f1f;"></div>
<div class="b" style="left:338.6px;top:466.8px;width:18.6px;height:18px;border-radius:2px;background:#1f8f49;"></div>
<svg class="b" style="left:338.6px;top:466.8px" width="19" height="18" viewBox="0 0 19 18"><path d="M5.9 4.4L12.6 13.7M12.6 4.4L5.9 13.7" stroke="#dcf2df" stroke-width="1.45"/></svg>
<div class="t " style="left:380.70px;top:466.19px;font-size:16.7px;color:#1f1f1f;-webkit-text-stroke:0.2px #1f1f1f;">Marketing.xlsx</div>
<svg class="b" style="left:871.45px;top:461.95px" width="27.7" height="27.7" viewBox="0 0 40 40"><defs><clipPath id="cqr447"><circle cx="20" cy="20" r="20"/></clipPath><radialGradient id="fqr447" cx="50%" cy="45%" r="50%"><stop offset="0" stop-color="#b99274"/><stop offset=".75" stop-color="#9a7356"/><stop offset="1" stop-color="#6e5038"/></radialGradient></defs><g clip-path="url(#cqr447)"><rect width="40" height="40" fill="#2b2b30"/><path d="M30 6L40 10V30L32 26Z" fill="#6f737a"/><path d="M0 18L6 16L7 30L0 34Z" fill="#5d6066"/><path d="M5 40C3 26 5 10 12 5C18 1 27 3 31 9C35 16 34 28 33 40Z" fill="#1a1412"/><path d="M9 14Q14 6 24 7Q30 9 31 20L29 30Q27 14 20 11Q13 12 11 26Z" fill="#5a3a22"/><ellipse cx="18.5" cy="20" rx="6.2" ry="8.8" fill="url(#fqr447)"/><path d="M13 34L24 34L25 40H12Z" fill="#0e1020"/></g></svg>
<div class="t " style="left:908.80px;top:467.27px;font-size:15.5px;color:#444746;-webkit-text-stroke:0.2px #444746;">me</div>
<div class="t " style="left:1118.70px;top:467.36px;font-size:15.4px;color:#444746;letter-spacing:0px;-webkit-text-stroke:0.2px #444746;">11:06 PM me</div>
<div class="t " style="left:1365.20px;top:467.27px;font-size:15.5px;color:#444746;letter-spacing:-0.4px;-webkit-text-stroke:0.2px #444746;">15 KB</div>
<div class="b" style="left:1655.35px;top:468.54999999999995px;width:3.5px;height:3.5px;border-radius:50%;background:#1f1f1f;"></div>
<div class="b" style="left:1655.35px;top:474.15px;width:3.5px;height:3.5px;border-radius:50%;background:#1f1f1f;"></div>
<div class="b" style="left:1655.35px;top:479.75px;width:3.5px;height:3.5px;border-radius:50%;background:#1f1f1f;"></div>
<svg class="b" style="left:1083.7px;top:1000.7px;" width="14" height="22" viewBox="0 0 14 22"><path d="M1.5 1.5V17L5.3 13.4L8 19.5L10.6 18.3L8 12.4H13Z" fill="#111" stroke="#fff" stroke-width="1.2" stroke-linejoin="round"/></svg>
<div class="b" style="left:0px;top:1060px;width:1730px;height:20px;background:#f4f4f8;"></div>
<div class="b" style="left:1701.5px;top:1024.5px;width:48px;height:46.5px;border-radius:24px;background:#fbfbfd;box-shadow:0 1px 3px rgba(0,0,0,.3);"></div>
<svg class="b" style="left:1712px;top:1041px;" width="11" height="14" viewBox="0 0 11 14"><path d="M8.4 1.8L2.7 7.3L8.4 12.8" fill="none" stroke="#3c3f44" stroke-width="1.6"/></svg>
<div class="b" style="left:1728px;top:0px;width:2px;height:1080px;background:#f7f7fa;"></div>
<svg class="b" style="left:0;top:1070px" width="10" height="10"><path d="M0 0V10H10A10 10 0 0 1 0 0Z" fill="#161824"/></svg>
<svg class="b" style="left:1719px;top:1069px" width="11" height="11"><path d="M11 0V11H0A11 11 0 0 0 11 0Z" fill="#161824"/></svg>
</body></html>
